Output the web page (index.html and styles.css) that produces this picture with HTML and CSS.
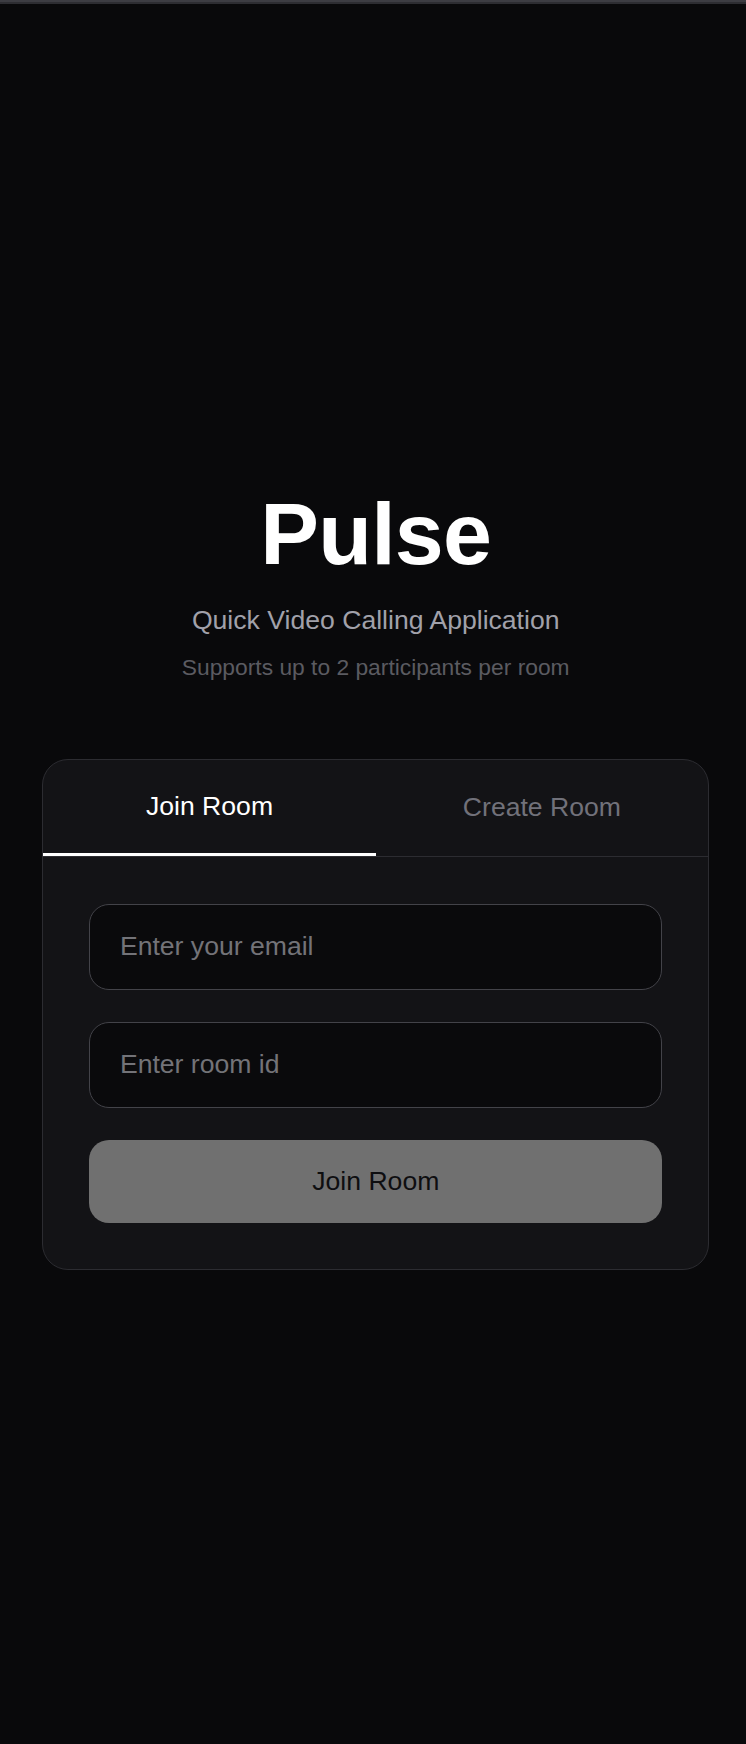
FILE: index.html
```html
<!DOCTYPE html>
<html lang="en">
<head>
<meta charset="utf-8">
<title>Pulse</title>
<link rel="stylesheet" href="styles.css">
</head>
<body>
<div class="topbar"></div>
<main class="page">
  <header class="hero">
    <h1 class="title">Pulse</h1>
    <p class="subtitle">Quick Video Calling Application</p>
    <p class="note">Supports up to 2 participants per room</p>
  </header>
  <section class="card">
    <div class="tabs">
      <button class="tab tab-active" type="button">Join Room</button>
      <button class="tab" type="button">Create Room</button>
    </div>
    <form class="form">
      <input class="field" type="email" placeholder="Enter your email">
      <input class="field" type="text" placeholder="Enter room id">
      <button class="submit" type="button">Join Room</button>
    </form>
  </section>
</main>
</body>
</html>
```

FILE: styles.css
```css
* {
  box-sizing: border-box;
}

html, body {
  margin: 0;
  padding: 0;
  background: #09090b;
  overflow: hidden;
}

body {
  font-family: "Liberation Sans", Arial, Helvetica, sans-serif;
  color: #ffffff;
}

.topbar {
  height: 3.7px;
  background: linear-gradient(to bottom, #3d3d43 0, #3d3d43 1.6px, #2d2d32 1.6px, #2d2d32 100%);
}

.page {
  padding: 486.8px 36.9px 0 42.3px;
  display: flex;
  flex-direction: column;
}

.hero {
  display: flex;
  flex-direction: column;
  align-items: center;
  text-align: center;
}

.title {
  margin: 0;
  font-size: 88px;
  line-height: 88px;
  font-weight: 700;
  letter-spacing: -0.8px;
  color: #ffffff;
}

.subtitle {
  margin: 24.6px 0 0;
  font-size: 26.6px;
  line-height: 35.2px;
  color: #a1a1aa;
}

.note {
  margin: 13.5px 0 0;
  font-size: 22.8px;
  line-height: 30.8px;
  color: #5b5b61;
}

.card {
  margin-top: 76.5px;
  width: 100%;
  background: #131316;
  border: 1px solid #2c2c31;
  border-radius: 26px;
  overflow: hidden;
}

.tabs {
  display: flex;
  border-bottom: 1px solid #2c2c31;
}

.tab {
  flex: 1 1 0;
  height: 95.7px;
  display: flex;
  align-items: center;
  justify-content: center;
  background: transparent;
  border: 0;
  padding: 0;
  margin: 0;
  font-family: inherit;
  font-size: 26.6px;
  line-height: 35.2px;
  color: #71717a;
  cursor: pointer;
}

.tab-active {
  color: #ffffff;
  border-bottom: 3.7px solid #ffffff;
}

.form {
  display: flex;
  flex-direction: column;
  gap: 32px;
  padding: 47px 45.8px 46px 46px;
  margin: 0;
}

.field {
  display: block;
  width: 100%;
  height: 86px;
  margin: 0;
  padding: 0 29.6px;
  background: #0a0a0c;
  border: 1px solid #434349;
  border-radius: 20px;
  font-family: inherit;
  font-size: 26.6px;
  line-height: 35.2px;
  color: #ffffff;
  outline: none;
}

.field::placeholder {
  color: #737378;
  opacity: 1;
}

.submit {
  display: block;
  width: 100%;
  height: 83px;
  margin: 0;
  padding: 0;
  background: #707070;
  border: 0;
  border-radius: 20px;
  font-family: inherit;
  font-size: 26.6px;
  line-height: 35.2px;
  color: #0e0e10;
  cursor: pointer;
}
```
